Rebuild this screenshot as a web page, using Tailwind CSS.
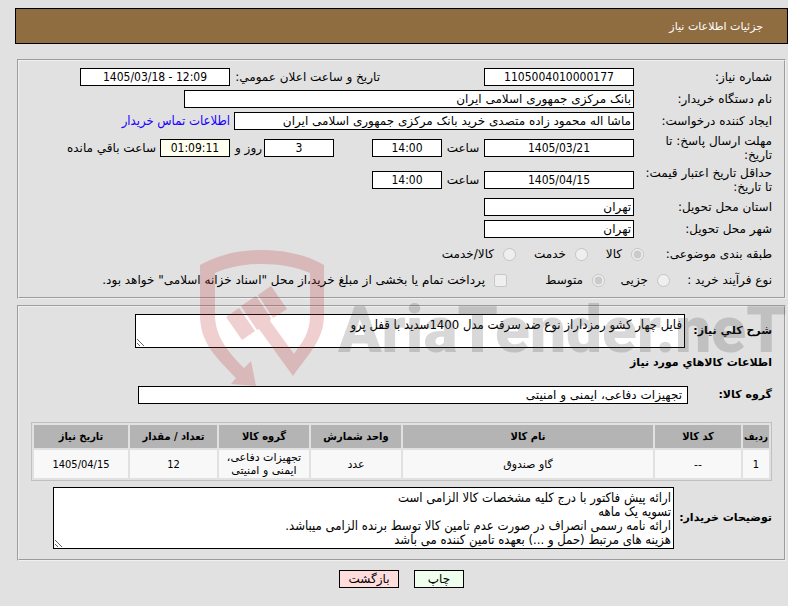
<!DOCTYPE html>
<html lang="fa" dir="rtl">
<head>
  <meta charset="UTF-8" />
  <meta name="viewport" content="width=device-width, initial-scale=1.0"/>
  <title>جزئیات اطلاعات نیاز</title>
  <script src="https://cdn.jsdelivr.net/npm/@tailwindcss/browser@4"></script>
</head>
<body class="relative bg-[#e1e1e1] text-black text-[12px] leading-[14px] font-['DejaVu_Sans',sans-serif]">

  <header class="mt-2 ml-[15px] h-9 px-6 pt-0.5 flex items-center bg-[#8f6d40] border border-black text-white text-[11px]">
    <h1>جزئیات اطلاعات نیاز</h1>
  </header>

  <form>
    <!-- need details -->
    <section class="mt-[15px] ml-[17px] mr-0.5 px-3 pt-[7px] pb-[7px] flex flex-col gap-1 border-2 [border-style:groove] border-[#f0f0f0]">
      <div class="flex items-center">
        <label for="needNo" class="w-[138px]">شماره نیاز:</label>
        <input id="needNo" readonly value="1105004010000177" class="w-[150px] h-[18px] bg-white border border-black text-center font-['DejaVu_Sans_Condensed','DejaVu_Sans',sans-serif]" />
        <label for="announce" class="w-[150px] mr-[104px]">تاریخ و ساعت اعلان عمومي:</label>
        <input id="announce" readonly value="1405/03/18 - 12:09" dir="ltr" class="w-[150px] h-[18px] bg-white border border-black text-center font-['DejaVu_Sans_Condensed','DejaVu_Sans',sans-serif]" />
      </div>
      <div class="flex items-center">
        <label for="org" class="w-[138px]">نام دستگاه خریدار:</label>
        <input id="org" readonly value="بانک مرکزی جمهوری اسلامی ایران" class="w-[450px] h-[18px] px-0.5 bg-white border border-black" />
      </div>
      <div class="flex items-center">
        <label for="creator" class="w-[138px]">ایجاد کننده درخواست:</label>
        <input id="creator" readonly value="ماشا اله محمود زاده متصدی خرید بانک مرکزی جمهوری اسلامی ایران" class="w-[400px] h-[18px] px-0.5 bg-white border border-black" />
        <a href="#" class="mr-1 text-[#1a00ff] text-[13px] font-['DejaVu_Sans_Condensed','DejaVu_Sans',sans-serif]">اطلاعات تماس خریدار</a>
      </div>
      <div class="flex items-center">
        <label for="replyDate" class="w-[138px] pl-2">مهلت ارسال پاسخ: تا تاریخ:</label>
        <input id="replyDate" readonly value="1405/03/21" dir="ltr" class="w-[150px] h-[18px] bg-white border border-black text-center font-['DejaVu_Sans_Condensed','DejaVu_Sans',sans-serif]" />
        <label for="replyTime" class="w-[42px] text-center">ساعت</label>
        <input id="replyTime" readonly value="14:00" dir="ltr" class="w-[70px] h-[18px] bg-white border border-black text-center font-['DejaVu_Sans_Condensed','DejaVu_Sans',sans-serif]" />
        <input aria-label="روز" readonly value="3" class="w-[70px] h-[18px] mr-[38px] bg-white border border-black text-center font-['DejaVu_Sans_Condensed','DejaVu_Sans',sans-serif]" />
        <label for="remain" class="w-[34px] pr-0.5 whitespace-nowrap">روز و</label>
        <input id="remain" readonly value="01:09:11" dir="ltr" class="w-[70px] h-[18px] bg-[#fffff0] border border-black text-center font-['DejaVu_Sans_Condensed','DejaVu_Sans',sans-serif]" />
        <span class="mr-1">ساعت باقي مانده</span>
      </div>
      <div class="flex items-center">
        <label for="priceDate" class="w-[138px] pl-2">حداقل تاریخ اعتبار قیمت: تا تاریخ:</label>
        <input id="priceDate" readonly value="1405/04/15" dir="ltr" class="w-[150px] h-[18px] bg-white border border-black text-center font-['DejaVu_Sans_Condensed','DejaVu_Sans',sans-serif]" />
        <label for="priceTime" class="w-[42px] text-center">ساعت</label>
        <input id="priceTime" readonly value="14:00" dir="ltr" class="w-[70px] h-[18px] bg-white border border-black text-center font-['DejaVu_Sans_Condensed','DejaVu_Sans',sans-serif]" />
      </div>
      <div class="flex items-center">
        <label for="province" class="w-[138px]">استان محل تحویل:</label>
        <input id="province" readonly value="تهران" class="w-[150px] h-[18px] px-0.5 bg-white border border-black" />
      </div>
      <div class="flex items-center">
        <label for="city" class="w-[138px]">شهر محل تحویل:</label>
        <input id="city" readonly value="تهران" class="w-[150px] h-[18px] px-0.5 bg-white border border-black" />
      </div>
      <div class="flex items-center h-6">
        <span class="w-[128px]">طبقه بندی موضوعی:</span>
        <label class="w-14 flex items-center gap-[9px]"><input type="radio" name="kind" disabled checked class="size-[13px]" /><span>کالا</span></label>
        <label class="w-[72px] flex items-center gap-[9px]"><input type="radio" name="kind" disabled class="size-[13px]" /><span>خدمت</span></label>
        <label class="flex items-center gap-[9px]"><input type="radio" name="kind" disabled class="size-[13px]" /><span>کالا/خدمت</span></label>
      </div>
      <div class="flex items-center h-5">
        <span class="w-[102px]">نوع فرآیند خرید :</span>
        <label class="w-[65px] flex items-center gap-[9px]"><input type="radio" name="process" disabled class="size-[13px]" /><span>جزیی</span></label>
        <label class="w-[98px] flex items-center gap-[9px]"><input type="radio" name="process" disabled checked class="size-[13px]" /><span>متوسط</span></label>
        <label class="flex items-center gap-[9px]"><input type="checkbox" disabled class="size-[13px]" /><span>پرداخت تمام یا بخشی از مبلغ خرید،از محل "اسناد خزانه اسلامی" خواهد بود.</span></label>
      </div>
    </section>

    <!-- goods -->
    <section class="mt-1.5 ml-[17px] mr-0.5 px-3 pt-[7px] pb-2.5 border-2 [border-style:groove] border-[#f0f0f0]">
      <div class="flex items-center">
        <label for="summary" class="w-[87px] font-bold text-[11px]">شرح کلي نياز:</label>
        <textarea id="summary" readonly class="w-[550px] h-[34px] px-0.5 pt-[3px] resize overflow-hidden bg-white border border-black text-[13px] font-['DejaVu_Sans_Condensed','DejaVu_Sans',sans-serif]">فایل چهار کشو رمزداراز نوع ضد سرقت مدل 1400سدید با قفل پرو</textarea>
      </div>
      <h2 class="mt-2 font-bold text-[11px]">اطلاعات کالاهاي مورد نياز</h2>
      <div class="mt-4 flex items-center">
        <label for="group" class="w-[84px] font-bold text-[11px]">گروه کالا:</label>
        <input id="group" readonly value="تجهیزات دفاعی، ایمنی و امنیتی" class="w-[550px] h-[18px] px-[5px] bg-white border border-black" />
      </div>

      <table class="mt-[18px] w-full table-fixed border border-[#c0c0c0] border-separate border-spacing-[2px] text-center text-[11px] leading-[13px]">
        <thead class="font-['DejaVu_Sans_Condensed','DejaVu_Sans',sans-serif]">
          <tr class="h-[23px] bg-[#b4b4b4]">
            <th class="w-[26px] whitespace-nowrap text-[10px]">ردیف</th>
            <th class="w-[86px]">کد کالا</th>
            <th>نام کالا</th>
            <th class="w-[90px]">واحد شمارش</th>
            <th class="w-[90px]">گروه کالا</th>
            <th class="w-[87px]">تعداد / مقدار</th>
            <th class="w-[94px]">تاریخ نیاز</th>
          </tr>
        </thead>
        <tbody>
          <tr class="h-[28px] bg-[#f8f8f8]">
            <td class="font-['DejaVu_Sans_Condensed','DejaVu_Sans',sans-serif]">1</td>
            <td>--</td>
            <td>گاو صندوق</td>
            <td>عدد</td>
            <td>تجهیزات دفاعی، ایمنی و امنیتی</td>
            <td class="font-['DejaVu_Sans_Condensed','DejaVu_Sans',sans-serif]">12</td>
            <td class="font-['DejaVu_Sans_Condensed','DejaVu_Sans',sans-serif]">1405/04/15</td>
          </tr>
        </tbody>
      </table>

      <div class="mt-1.5 flex items-center">
        <label for="notes" class="w-[98px] font-bold text-[11px]">توضیحات خریدار:</label>
        <textarea id="notes" readonly class="w-[621px] h-[62px] px-0.5 pt-[3px] resize overflow-hidden bg-white border border-black text-[13px] leading-[14px] font-['DejaVu_Sans_Condensed','DejaVu_Sans',sans-serif]">ارائه پیش فاکتور با درج کلیه مشخصات کالا الزامی است
تسویه یک ماهه
ارائه نامه رسمی انصراف در صورت عدم تامین کالا توسط برنده الزامی میباشد.
هزینه های مرتبط (حمل و ...) بعهده تامین کننده می باشد</textarea>
      </div>
    </section>

    <div class="mt-[9px] ml-[15px] flex justify-center gap-[15px]">
      <button type="button" class="w-[50px] h-[18px] bg-[#eeffee] border border-black">چاپ</button>
      <button type="button" class="w-[60px] h-[18px] bg-[#ffdddd] border border-black">بازگشت</button>
    </div>
  </form>

  <!-- watermark -->
  <svg class="absolute left-[200px] top-[250px] w-[588px] h-[140px] pointer-events-none" viewBox="200 250 588 140" direction="ltr">
    <g fill="#ba3134" fill-opacity=".23">
      <path d="M200 265C219 255 238 250 262 250S306 255 324 265V315C324 340 309 353 293 376L259 329 257 330 241 306 256 296 271 318 270 321 294 354C303 341 310 333 310 315V273C296 267 280 264 262 264S229 267 215 273V315C215 335 226 350 244 368L251 361 256 386 231 384 236 378C216 357 200 343 200 315Z"/>
      <path d="M226 317 239 308 255 331 242 340ZM258 295 271 286 287 309 273 318Z"/>
    </g>
    <text x="338" y="352" font-size="64" font-weight="900" font-family="Roboto,'Liberation Sans',sans-serif" fill="#3c3c3c" fill-opacity=".2">AriaTender.neT</text>
  </svg>
</body>
</html>
